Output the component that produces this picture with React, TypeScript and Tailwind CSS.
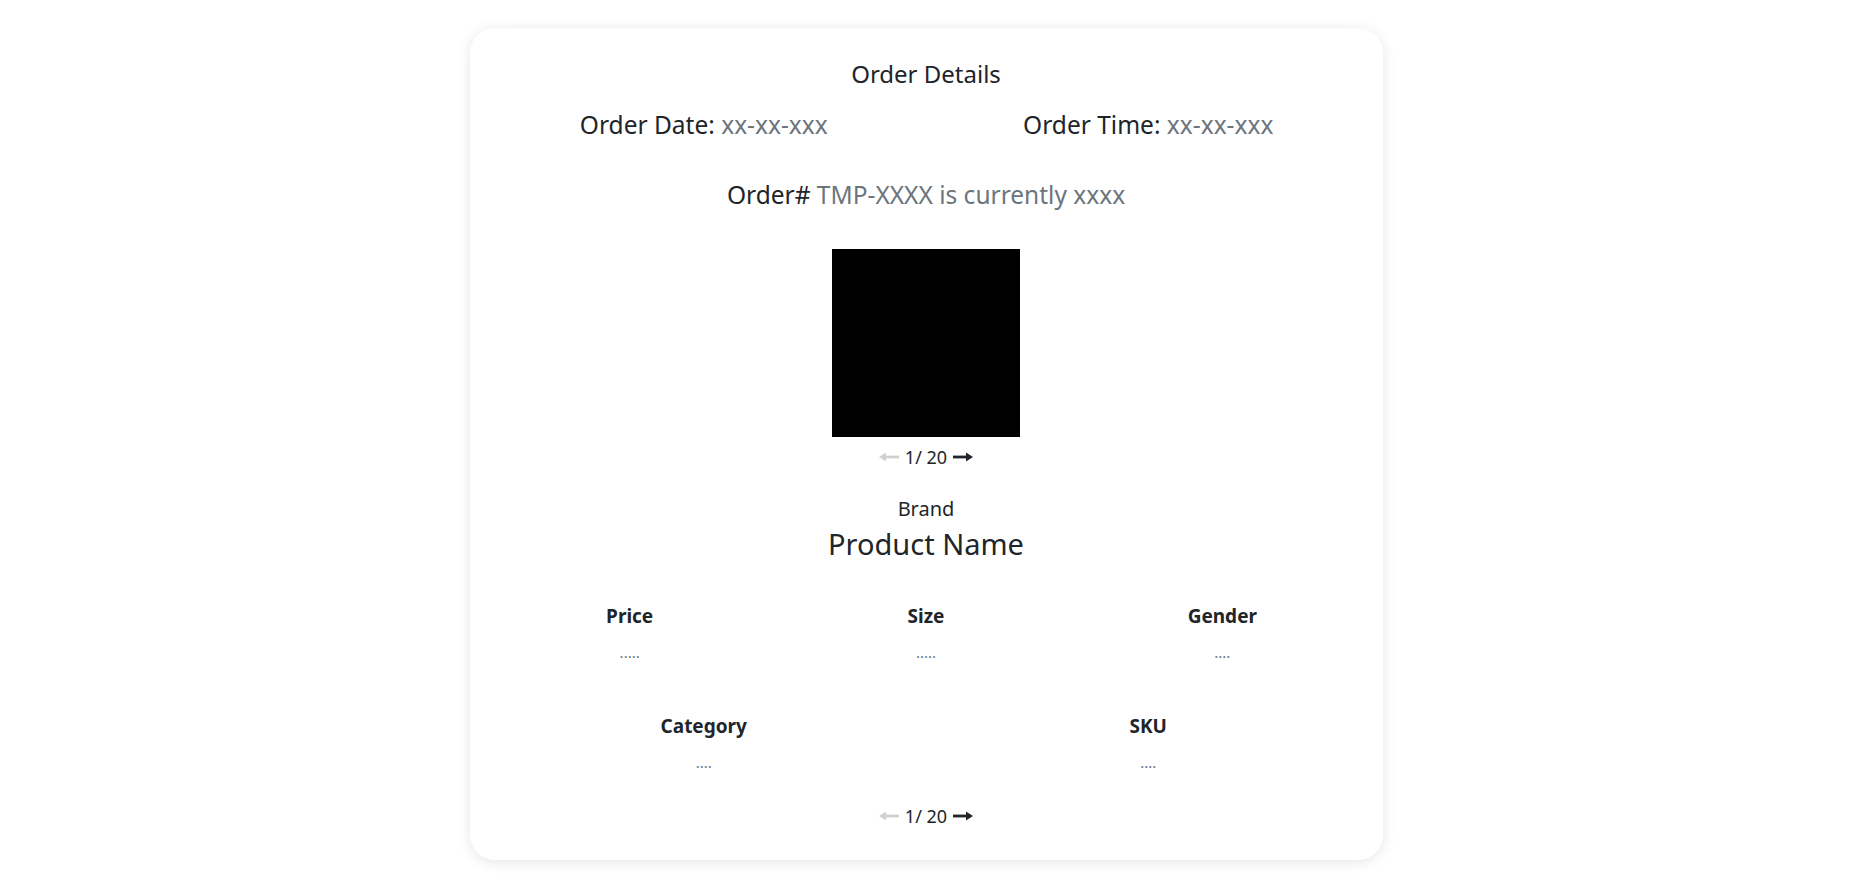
import React from "react";

const font = { fontFamily: '"Segoe UI", "Noto Sans", "Open Sans", sans-serif' };

function Arrow({ dir, light }: { dir: "left" | "right"; light?: boolean }) {
  const color = light ? "#d0d0d0" : "#212529";
  return (
    <svg width="20" height="12" viewBox="0 0 20 12" className="inline-block">
      {dir === "left" ? (
        <>
          <rect x="6" y="4.6" width="14" height="2.8" fill={color} />
          <polygon points="0,6 7,1.5 7,10.5" fill={color} />
        </>
      ) : (
        <>
          <rect x="0" y="4.6" width="14" height="2.8" fill={color} />
          <polygon points="20,6 13,1.5 13,10.5" fill={color} />
        </>
      )}
    </svg>
  );
}

function Pager({ className }: { className?: string }) {
  return (
    <div className={"flex items-center justify-center gap-[6px] text-[18px] leading-[24px] text-[#212529] " + (className ?? "")}>
      <Arrow dir="left" light />
      <span>1/ 20</span>
      <Arrow dir="right" />
    </div>
  );
}

function Field({ label, value }: { label: string; value: string }) {
  return (
    <div className="flex flex-col items-center">
      <div className="text-[19px] leading-[24px] font-bold text-[#212529]">{label}</div>
      <div className="mt-[14px] text-[15px] leading-[20px] text-[#6c757d]">{value}</div>
    </div>
  );
}

export default function App() {
  return (
    <div className="min-h-screen bg-white pt-[28px]" style={font}>
      <div className="mx-auto w-[913px] rounded-[25px] bg-white px-[12px] pt-[31px] pb-[32px] shadow-[0_2px_14px_rgba(0,0,0,0.1)] text-[#212529]">
        <div className="text-center text-[24px] leading-[30px]">Order Details</div>
        <div className="mt-[21px] grid grid-cols-2 text-[24.5px] leading-[30px]">
          <div className="text-center">
            Order Date: <span className="text-[#6c757d]">xx-xx-xxx</span>
          </div>
          <div className="text-center">
            Order Time: <span className="text-[#6c757d]">xx-xx-xxx</span>
          </div>
        </div>
        <div className="mt-[40px] text-center text-[24.5px] leading-[30px]">
          Order# <span className="text-[#6c757d]">TMP-XXXX is currently xxxx</span>
        </div>
        <div className="mt-[39px] flex justify-center">
          <div className="h-[188px] w-[188px] bg-black" />
        </div>
        <Pager className="mt-[8px]" />
        <div className="mt-[28px] text-center text-[20px] leading-[24px]">Brand</div>
        <div className="mt-[5px] text-center text-[29px] leading-[36px]">Product Name</div>
        <div className="mt-[42px] grid grid-cols-3">
          <Field label="Price" value="....." />
          <Field label="Size" value="....." />
          <Field label="Gender" value="...." />
        </div>
        <div className="mt-[52px] grid grid-cols-2">
          <Field label="Category" value="...." />
          <Field label="SKU" value="...." />
        </div>
        <Pager className="mt-[32px]" />
      </div>
    </div>
  );
}
